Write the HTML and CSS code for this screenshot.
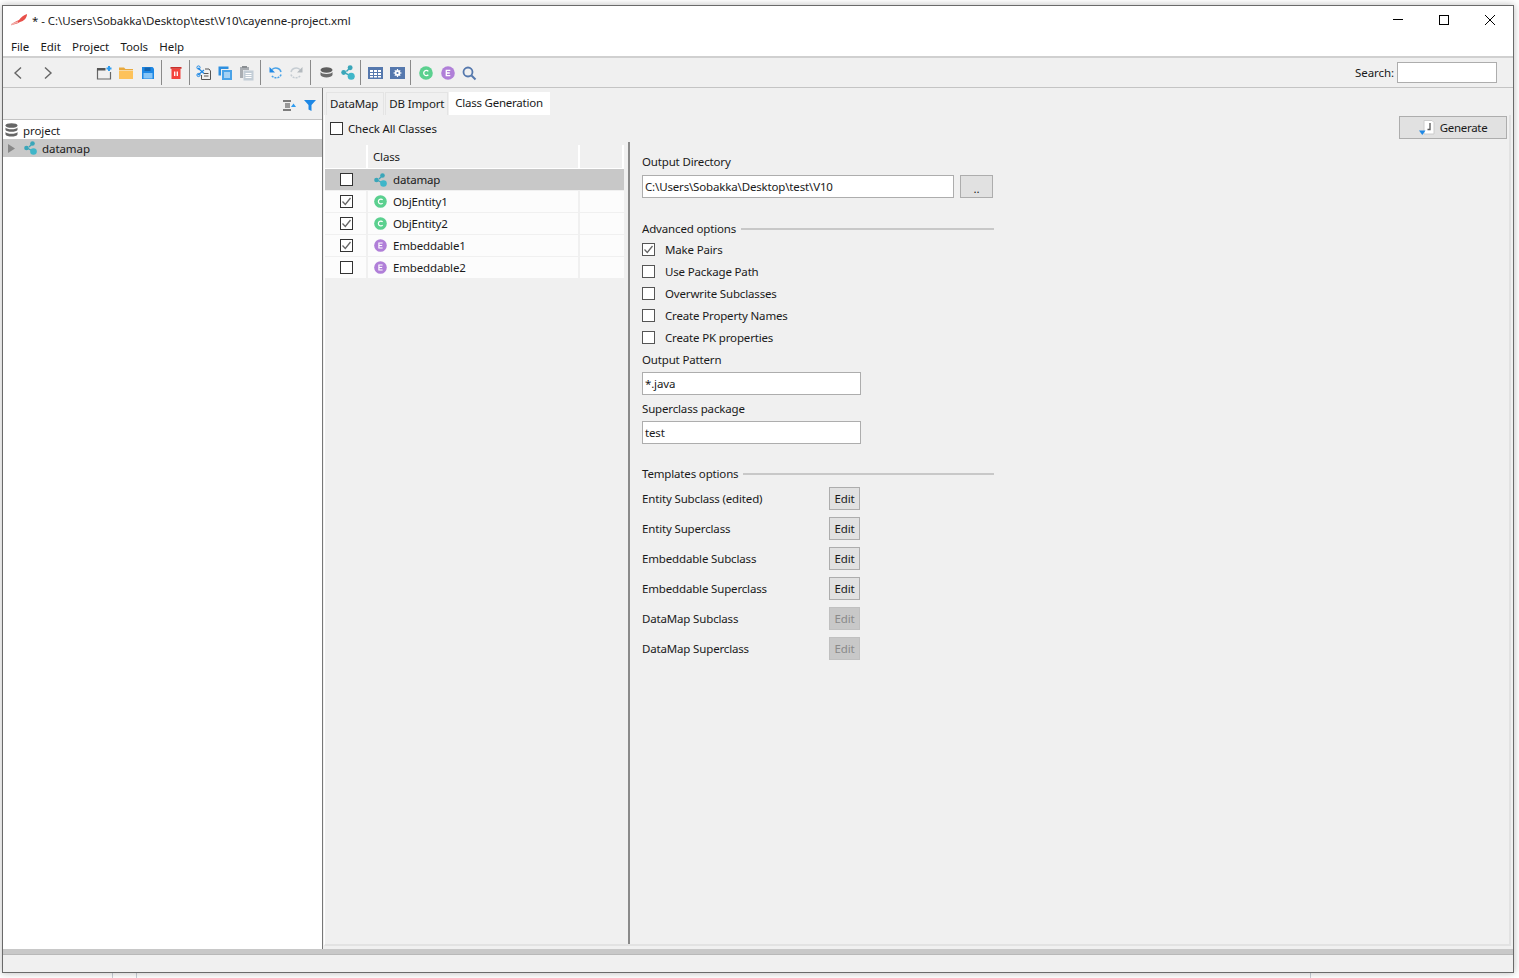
FILE: index.html
```html
<!DOCTYPE html>
<html lang="en">
<head>
<meta charset="utf-8">
<title>Cayenne Modeler</title>
<link rel="stylesheet" href="styles.css">
</head>
<body>
<svg class="defs" width="0" height="0">
  <symbol id="i-map" viewBox="0 0 13 14"><path d="M5 6 8 3M4 7.500 8.500 10" stroke="#3aa6b9" stroke-width="1.300" fill="none"/><circle cx="8.500" cy="2.500" r="2.300" fill="#3aa6b9"/><circle cx="2.500" cy="7" r="2.300" fill="#3aa6b9"/><circle cx="9.500" cy="10.500" r="3.300" fill="#3fb6c9"/></symbol>
  <symbol id="i-db" viewBox="0 0 13 14"><ellipse cx="6.500" cy="2.500" rx="6" ry="2.300" fill="#666"/><path d="M.5 4.500c1 2.400 11 2.400 12 0v2.500c-1 2.400-11 2.400-12 0zM.5 9c1 2.400 11 2.400 12 0v2.500c-1 2.800-11 2.800-12 0z" fill="#666"/></symbol>
  <symbol id="i-db2" viewBox="0 0 13 11"><ellipse cx="6.500" cy="3" rx="6" ry="2.800" fill="#5e5e5e"/><path d="M.5 5c1 2.600 11 2.600 12 0v3c-1 3.300-11 3.300-12 0z" fill="#6b6b6b"/></symbol>
  <symbol id="i-c" viewBox="1 1 14 14"><circle cx="8" cy="8" r="6.800" fill="#5bd08f"/><path d="M10.300 6.300A2.600 2.600 0 1 0 10.300 9.700" stroke="#fff" stroke-width="1.300" fill="none"/></symbol>
  <symbol id="i-e" viewBox="1 1 14 14"><circle cx="8" cy="8" r="6.800" fill="#b07fd8"/><path d="M10.300 5.300H6.300v5.400h4M6.300 8h3.500" stroke="#fff" stroke-width="1.300" fill="none"/></symbol>
  <symbol id="i-check" viewBox="0 0 13 13"><path d="M2.500 6.500 5.300 9.500 10.500 3" stroke="#666" stroke-width="1.300" fill="none"/></symbol>
</svg>
<div class="window">
  <header class="titlebar">
    <svg class="app-icon" width="17" height="12" viewBox="0 0 17 12"><path d="M0 11C3 8 6 7 8 6 10 3 13 1 16 0 16 4 13 7 9 8 6 10 3 10 0 11Z" fill="#e8504a"/><path d="M0 11C3 9 5 8.500 7 8" stroke="#f2b0ac" stroke-width="1.500" fill="none"/></svg>
    <span class="title">* - C:\Users\Sobakka\Desktop\test\V10\cayenne-project.xml</span>
    <div class="controls">
      <svg width="12" height="12" viewBox="0 0 12 12"><path d="M1 5.500H11" stroke="#000" fill="none"/></svg>
      <svg width="12" height="12" viewBox="0 0 12 12"><rect x="1.500" y="1.500" width="9" height="9" stroke="#000" fill="none"/></svg>
      <svg width="12" height="12" viewBox="0 0 12 12"><path d="M1 1 11 11M11 1 1 11" stroke="#000" fill="none"/></svg>
    </div>
  </header>
  <nav class="menubar"><span>File</span><span>Edit</span><span>Project</span><span>Tools</span><span>Help</span></nav>
  <div class="toolbar">
    <span class="tb tb-back"><svg width="16" height="16" viewBox="0 0 16 16"><path d="M11 2.500 5 8l6 5.500" stroke="#666" stroke-width="1.400" fill="none"/></svg></span>
    <span class="tb tb-fwd"><svg width="16" height="16" viewBox="0 0 16 16"><path d="M5 2.500 11 8l-6 5.500" stroke="#666" stroke-width="1.400" fill="none"/></svg></span>
    <span class="tb tb-new"><svg width="16" height="16" viewBox="0 0 16 16"><path d="M1.500 3.500v10.500h13v-7" stroke="#666" stroke-width="1.200" fill="none"/><path d="M1 3h8.500v2.500H1z" fill="#555"/><path d="M10.500 3.500h5M13 1v5" stroke="#2d9cf0" stroke-width="2" fill="none"/></svg></span>
    <span class="tb"><svg width="16" height="16" viewBox="0 0 16 16"><path d="M1 2.500h5l1.500 1.500H15v1H1z" fill="#e8a93e"/><path d="M1 5.500h14V14H1z" fill="#fdc25a"/></svg></span>
    <span class="tb"><svg width="16" height="16" viewBox="0 0 16 16"><path d="M2 2h10.500L14 3.500V14H2z" fill="#1e88e5"/><path d="M4.500 2.500h6v3.500h-6z" fill="#1565b0"/><path d="M3.500 8h9v5.500h-9z" fill="#86c5f7"/></svg></span>
    <i class="sep sep-a"></i>
    <span class="tb tb-after"><svg width="16" height="16" viewBox="0 0 16 16"><path d="M2.500 2h11v1.800h-11z" fill="#c9302c"/><path d="M3.500 3.800h9V14h-9z" fill="#f4433c"/><path d="M6.700 6.500v4.500M9.300 6.500v4.500" stroke="#fff" stroke-width="1.300"/></svg></span>
    <i class="sep sep-a"></i>
    <span class="tb tb-after"><svg width="16" height="16" viewBox="0 0 16 16"><path d="M2 3 8 8.500M2 10 8 5" stroke="#1e88e5" stroke-width="1.200"/><circle cx="2.500" cy="2.500" r="1.600" fill="none" stroke="#1e88e5"/><circle cx="2.500" cy="10" r="1.600" fill="none" stroke="#1e88e5"/><path d="M9 4h4l1.500 2v8.500H5.500V10" stroke="#555" fill="none"/><path d="M8 8.500h4.500M8 11h4.500" stroke="#555"/></svg></span>
    <span class="tb tb-tight"><svg width="16" height="16" viewBox="0 0 16 16"><path d="M1.500 1.500h10v2.500H4v6.500H1.500z" fill="#2d8fe0"/><path d="M5 5h10v10H5z" fill="#4aa3e8"/><path d="M7 8h6M7 10h6M7 12h6" stroke="#fff"/></svg></span>
    <span class="tb tb-tight"><svg width="16" height="16" viewBox="0 0 16 16"><path d="M2 2h9v3H5v8H2z" fill="#a9adb2"/><path d="M4 1h5v2H4z" fill="#8a8e92"/><path d="M5.500 5.500h10v10h-10z" fill="#c3cdd6"/><path d="M7.500 8.500h6M7.500 10.500h6M7.500 12.500h6" stroke="#fff"/></svg></span>
    <i class="sep sep-b"></i>
    <span class="tb tb-after"><svg width="16" height="16" viewBox="-1 0 16 16"><path d="M4 4.500C7 2 12 3 13 7" stroke="#4aa3e8" stroke-width="1.500" fill="none"/><path d="M13 9.500C12 13.500 6 14 3.500 10.500" stroke="#4aa3e8" stroke-width="1.500" stroke-dasharray="2 1" fill="none"/><path d="M1.500 2v5.500H7z" fill="#1e88e5"/></svg></span>
    <span class="tb tb-tight"><svg width="16" height="16" viewBox="0 0 16 16"><path d="M12 4.500C9 2 4 3 3 7" stroke="#c5ccd2" stroke-width="1.500" fill="none"/><path d="M3 9.500C4 13.500 10 14 12.500 10.500" stroke="#c5ccd2" stroke-width="1.500" stroke-dasharray="2 1" fill="none"/><path d="M14.500 2v5.500H9z" fill="#b3b9be"/></svg></span>
    <i class="sep sep-b"></i>
    <span class="tb tb-after tb-shift"><svg width="13" height="11"><use href="#i-db2"/></svg></span>
    <span class="tb tb-shift"><svg width="14" height="15"><use href="#i-map"/></svg></span>
    <i class="sep sep-a"></i>
    <span class="tb tb-near tb-shift"><svg width="15" height="12" viewBox="0 0 15 12"><path d="M0 0h15v12H0z" fill="#5578ad"/><path d="M2 3h3v2H2zM6 3h3v2H6zM10 3h3v2h-3zM2 6h3v2H2zM6 6h3v2H6zM10 6h3v2h-3zM2 9h3v1.500H2zM6 9h3v1.500H6zM10 9h3v1.500h-3z" fill="#fff"/></svg></span>
    <span class="tb tb-shift"><svg width="15" height="12" viewBox="0 0 15 12"><path d="M0 0h15v12H0z" fill="#5578ad"/><circle cx="7.500" cy="6" r="2" fill="#5578ad" stroke="#fff" stroke-width="1.800"/><path d="M7.500 2v1.500M7.500 8.500V10M3.500 6H5M10 6h1.500M4.800 3.300l1 1M9.200 7.700l1 1M10.200 3.300l-1 1M5.800 7.700l-1 1" stroke="#fff" stroke-width="1.200"/></svg></span>
    <i class="sep sep-b"></i>
    <span class="tb tb-after tb-shift"><svg width="14" height="14"><use href="#i-c"/></svg></span>
    <span class="tb tb-shift"><svg width="14" height="14"><use href="#i-e"/></svg></span>
    <span class="tb tb-tight tb-shift"><svg width="16" height="16" viewBox="0 0 16 16"><circle cx="7" cy="7" r="4.500" fill="none" stroke="#5578ad" stroke-width="1.800"/><path d="M10.500 10.500 14.500 14.500" stroke="#5578ad" stroke-width="2"/></svg></span>
    <label class="search">Search:<span class="field search-field"></span></label>
  </div>
  <main class="split">
    <aside class="side">
      <div class="side-head">
        <svg width="13" height="11" viewBox="0 0 13 11"><path d="M0 1h8M0 10h8" stroke="#555" stroke-width="1.600" fill="none"/><path d="M2 3h5v5H2z" fill="#999"/><path d="M8 7 10.500 3.500 13 7z" fill="#2d9cf0"/></svg>
        <svg width="12" height="11" viewBox="0 0 12 11"><path d="M0 0h12L7.500 5v6l-3-1.500V5z" fill="#1e88e5"/></svg>
      </div>
      <div class="tree">
        <div class="node"><svg class="node-db" width="13" height="14"><use href="#i-db"/></svg><span>project</span></div>
        <div class="node node-sel"><svg class="arrow" width="7" height="9" viewBox="0 0 7 9"><path d="M0 0 7 4.500 0 9z" fill="#888"/></svg><svg class="node-map" width="13" height="14"><use href="#i-map"/></svg><span>datamap</span></div>
      </div>
    </aside>
    <section class="editor">
      <div class="tabs"><span class="tab tab-map">DataMap</span><span class="tab">DB Import</span><span class="tab tab-on">Class Generation</span></div>
      <div class="pane">
        <div class="pane-top">
          <label class="check-all"><span class="box"></span><span>Check All Classes</span></label>
          <span class="btn btn-gen"><svg width="16" height="16" viewBox="0 0 16 16"><path d="M5 .5h8l2 2v11.500H5z" fill="#fff" stroke="#ccc"/><path d="M11 3v6.500H8.500" stroke="#555" stroke-width="1.300" fill="none"/><path d="M0 10.500h6.500L3.300 15z" fill="#1e88e5"/></svg><span>Generate</span></span>
        </div>
        <div class="pane-body">
          <div class="classes">
            <div class="row row-head"><span class="c1"></span><span class="c2">Class</span><span class="c3"></span></div>
            <div class="row row-sel"><span class="c1"><span class="box"></span></span><span class="c2"><svg width="13" height="14"><use href="#i-map"/></svg><span>datamap</span></span><span class="c3"></span></div>
            <div class="row"><span class="c1"><span class="box"><svg width="13" height="13"><use href="#i-check"/></svg></span></span><span class="c2"><svg width="13" height="13"><use href="#i-c"/></svg><span>ObjEntity1</span></span><span class="c3"></span></div>
            <div class="row"><span class="c1"><span class="box"><svg width="13" height="13"><use href="#i-check"/></svg></span></span><span class="c2"><svg width="13" height="13"><use href="#i-c"/></svg><span>ObjEntity2</span></span><span class="c3"></span></div>
            <div class="row"><span class="c1"><span class="box"><svg width="13" height="13"><use href="#i-check"/></svg></span></span><span class="c2"><svg width="13" height="13"><use href="#i-e"/></svg><span>Embeddable1</span></span><span class="c3"></span></div>
            <div class="row"><span class="c1"><span class="box"></span></span><span class="c2"><svg width="13" height="13"><use href="#i-e"/></svg><span>Embeddable2</span></span><span class="c3"></span></div>
          </div>
          <div class="form">
            <div class="lbl lbl-first">Output Directory</div>
            <div class="dir-row"><span class="field field-dir">C:\Users\Sobakka\Desktop\test\V10</span><span class="btn btn-dots">..</span></div>
            <div class="legend legend-adv"><span>Advanced options</span><i></i></div>
            <label class="opt"><span class="box"><svg width="13" height="13"><use href="#i-check"/></svg></span><span class="txt">Make Pairs</span></label>
            <label class="opt"><span class="box"></span><span class="txt">Use Package Path</span></label>
            <label class="opt"><span class="box"></span><span class="txt">Overwrite Subclasses</span></label>
            <label class="opt"><span class="box"></span><span class="txt">Create Property Names</span></label>
            <label class="opt"><span class="box"></span><span class="txt">Create PK properties</span></label>
            <div class="lbl lbl-pattern">Output Pattern</div>
            <span class="field field-short">*.java</span>
            <div class="lbl lbl-super">Superclass package</div>
            <span class="field field-short">test</span>
            <div class="legend legend-tpl"><span>Templates options</span><i></i></div>
            <div class="tpl"><span>Entity Subclass (edited)</span><span class="btn btn-edit">Edit</span></div>
            <div class="tpl"><span>Entity Superclass</span><span class="btn btn-edit">Edit</span></div>
            <div class="tpl"><span>Embeddable Subclass</span><span class="btn btn-edit">Edit</span></div>
            <div class="tpl"><span>Embeddable Superclass</span><span class="btn btn-edit">Edit</span></div>
            <div class="tpl"><span>DataMap Subclass</span><span class="btn btn-edit btn-off">Edit</span></div>
            <div class="tpl"><span>DataMap Superclass</span><span class="btn btn-edit btn-off">Edit</span></div>
          </div>
        </div>
      </div>
    </section>
  </main>
  <footer class="status"></footer>
</div>
</body>
</html>
```
FILE: styles.css
```css
* { box-sizing: border-box; }
html, body { height: 100%; margin: 0; overflow: hidden; }
body {
  padding: 5px 5px 5px 2px;
  background-color: #fff;
  background-image: linear-gradient(#c9d0d8, #c9d0d8), linear-gradient(#c9d0d8, #c9d0d8), linear-gradient(#c9d0d8, #c9d0d8);
  background-size: 1px 6px;
  background-repeat: no-repeat;
  background-position: 112px 100%, 136px 100%, 1310px 100%;
  font: 11.5px/16px "Noto Sans", "Open Sans", sans-serif;
  letter-spacing: -.07px;
  color: #1a1a1a;
}
.defs { position: absolute; }
.window {
  width: 1512px;
  height: 968px;
  display: flex;
  flex-direction: column;
  border: 1px solid #6a6a6a;
  background: #f0f0f0;
  box-shadow: 0 0 7px rgba(0, 0, 0, .28);
}
.titlebar { height: 28px; flex: none; display: flex; align-items: center; padding: 0 0 0 8px; background: #fff; }
.app-icon { margin-right: 4px; }
.title { flex: 1; color: #222; padding-top: 1px; }
.controls { display: flex; gap: 34px; margin-right: 17px; }
.menubar { height: 22px; flex: none; display: flex; align-items: center; gap: 11.3px; padding: 3px 0 0 8px; background: #fff; }
.toolbar { height: 32px; flex: none; display: flex; align-items: center; padding-left: 4px; border-top: 2px solid #d0d0d0; border-bottom: 1px solid #c4c4c4; }
.tb { width: 22px; height: 22px; flex: none; display: flex; align-items: center; justify-content: center; }
.tb-fwd { margin-left: 8px; }
.tb-new { margin-left: 34px; }
.tb-after { margin-left: 3px; }
.tb-near { margin-left: 2px; }
.tb-tight { margin-left: -1px; }
.tb-shift svg { margin-left: 2px; }
.sep { width: 1px; height: 25px; flex: none; background: #8a8a8a; }
.sep-a { margin-left: 2px; }
.sep-b { margin-left: 3px; }
.search { margin-left: auto; margin-right: 16px; display: flex; align-items: center; gap: 3px; }
.field { display: block; height: 23px; line-height: 21px; padding-left: 2px; background: #fff; border: 1px solid #adadad; }
.search-field { width: 100px; height: 21px; }
.split { flex: 1; min-height: 0; display: flex; }
.side { width: 320px; flex: none; display: flex; flex-direction: column; border-right: 1px solid #777; }
.side-head { height: 32px; flex: none; display: flex; align-items: center; justify-content: flex-end; gap: 8px; padding: 4px 6px 0 0; border-bottom: 1px solid #c4c4c4; }
.tree { flex: 1; padding-top: 1px; background: #fff; }
.node { height: 18px; display: flex; align-items: center; }
.node span { padding-top: 2px; }
.node-db { margin: 0 5px 0 2px; }
.node-sel { background: #c8c8c8; }
.arrow { margin: 0 9px 0 5px; }
.node-map { margin-right: 5px; }
.editor { flex: 1; min-width: 0; display: flex; flex-direction: column; padding: 4px 2px 3px 1px; letter-spacing: -.16px; }
.tabs { height: 23px; flex: none; display: flex; align-items: flex-end; padding-left: 2px; }
.tab { height: 23px; padding: 3px 3px 0 3px; border: 1px solid #e4e4e4; border-bottom: 0; margin-right: 1px; white-space: nowrap; }
.tab-map { padding-right: 5px; }
.tab-on { padding: 3px 7px 0 6px; letter-spacing: -.24px; background: #fff; border: 0; margin: 0; }
.pane { flex: 1; min-height: 0; display: flex; flex-direction: column; border: 1px solid #fff; border-top: 0; border-right: 2px solid #e2e2e2; border-bottom: 2px solid #e2e2e2; }
.pane-top { height: 27px; flex: none; display: flex; align-items: center; justify-content: space-between; padding: 0 2px 2px 5px; }
.box { width: 13px; height: 13px; flex: none; display: block; background: #fff; border: 1px solid #333; }
.box svg { display: block; margin: -1px; }
.txt { padding-top: 2px; }
.check-all { display: flex; align-items: center; gap: 5px; margin-top: 2px; }
.btn { display: flex; align-items: center; justify-content: center; background: #e1e1e1; border: 1px solid #adadad; }
.btn-gen { width: 108px; height: 23px; gap: 5px; letter-spacing: -.3px; }
.pane-body { flex: 1; min-height: 0; display: flex; }
.classes { width: 305px; flex: none; padding-right: 4px; border-right: 2px solid #8a8a8a; }
.row { height: 22px; display: flex; background: #fcfcfc; border-bottom: 1px solid #f0f0f0; }
.row span[class^="c"] { display: flex; align-items: center; }
.row .c1 { width: 43px; flex: none; justify-content: center; padding-left: 2px; border-right: 2px solid #f0f0f0; }
.row .c2 { width: 212px; flex: none; gap: 6px; padding-left: 5px; border-right: 2px solid #f0f0f0; }
.row .c2 svg { margin-left: 1px; }
.row .c3 { flex: 1; }
.row-head { height: 27px; background: #f0f0f0; border-bottom: 1px solid #fff; padding-top: 3px; }
.row-head .c1, .row-head .c2, .row-head .c3 { border-right: 2px solid #fff !important; }
.row-sel { background: #c8c8c8; }
.row-sel .c1, .row-sel .c2 { border-right-color: #c8c8c8 !important; }
.form { flex: 1; padding-left: 12px; }
.lbl { height: 24px; display: flex; align-items: center; }
.lbl-first { height: 33px; padding-top: 6px; }
.lbl-super { height: 26px; padding-top: 2px; }
.dir-row { display: flex; gap: 6px; width: 351px; }
.field-dir { width: 312px; }
.btn-dots { width: 33px; height: 23px; padding-top: 4px; }
.legend { width: 352px; display: flex; align-items: center; gap: 5px; height: 19px; }
.legend i { flex: 1; height: 2px; background: #c8c8c8; }
.legend-adv { margin-top: 21px; }
.legend-tpl { margin-top: 20px; height: 20px; }
.opt { height: 22px; display: flex; align-items: center; gap: 10px; }
.opt .box { border-color: #555; }
.field-short { width: 219px; }
.tpl { width: 218px; height: 30px; display: flex; align-items: center; justify-content: space-between; }
.btn-edit { width: 31px; height: 23px; margin-top: -2px; padding-top: 2px; }
.btn-off { background: #c8c8c8; border-color: #c0c0c0; color: #8a8a8a; }
.status { height: 23px; flex: none; border-top: 5px solid #c8c8c8; box-shadow: inset 0 1px 0 #b8b8b8; }
```
